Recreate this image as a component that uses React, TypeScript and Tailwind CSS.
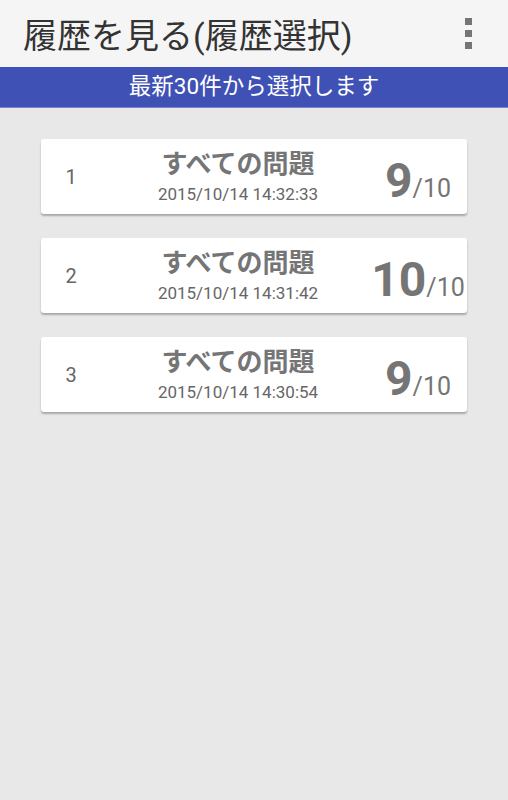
import React from "react";

const FONT = { fontFamily: 'Roboto, "Noto Sans CJK JP", sans-serif' };

const ROWS = [
  { no: 1, title: "すべての問題", date: "2015/10/14 14:32:33", score: 9, total: 10 },
  { no: 2, title: "すべての問題", date: "2015/10/14 14:31:42", score: 10, total: 10 },
  { no: 3, title: "すべての問題", date: "2015/10/14 14:30:54", score: 9, total: 10 },
];

function MenuDots() {
  return (
    <div className="flex flex-col gap-[5px]">
      <span className="block h-[7px] w-[7px] bg-[#757575]" />
      <span className="block h-[7px] w-[7px] bg-[#757575]" />
      <span className="block h-[7px] w-[7px] bg-[#757575]" />
    </div>
  );
}

function HistoryCard({ row }: { row: (typeof ROWS)[number] }) {
  return (
    <div className="grid h-[75px] grid-cols-[60px_274px_86px] items-center rounded-[3px] bg-white shadow-[0_2px_2px_rgba(0,0,0,0.28)]">
      <div className="text-center text-[20px] text-[#666]">{row.no}</div>
      <div className="flex flex-col items-center self-stretch pt-[10px]">
        <span className="text-[26px] font-bold leading-[30px] text-[#757575]">
          {row.title}
        </span>
        <span className="mt-[4px] text-[17px] leading-[22px] text-[#666]">{row.date}</span>
      </div>
      <div className="mt-[8px] flex items-baseline justify-center text-[#757575]">
        <span className="text-[48px] font-bold leading-none">{row.score}</span>
        <span className="text-[25px] leading-none">/{row.total}</span>
      </div>
    </div>
  );
}

export default function App() {
  return (
    <div className="flex min-h-[800px] flex-col bg-[#e8e8e8]" style={FONT}>
      <header className="flex h-[67px] items-center justify-between bg-[#f5f5f5] pl-[23px] pr-[36px]">
        <h1 className="pt-[4px] text-[34px] leading-none text-[#333]">履歴を見る(履歴選択)</h1>
        <MenuDots />
      </header>
      <div className="flex h-[41px] items-center justify-center border-b border-[#7986cb] bg-[#3f51b5] text-[22.5px] text-white">
        最新30件から選択します
      </div>
      <main className="flex flex-col gap-[24px] px-[41px] pt-[31px]">
        {ROWS.map((r) => (
          <HistoryCard key={r.no} row={r} />
        ))}
      </main>
    </div>
  );
}
